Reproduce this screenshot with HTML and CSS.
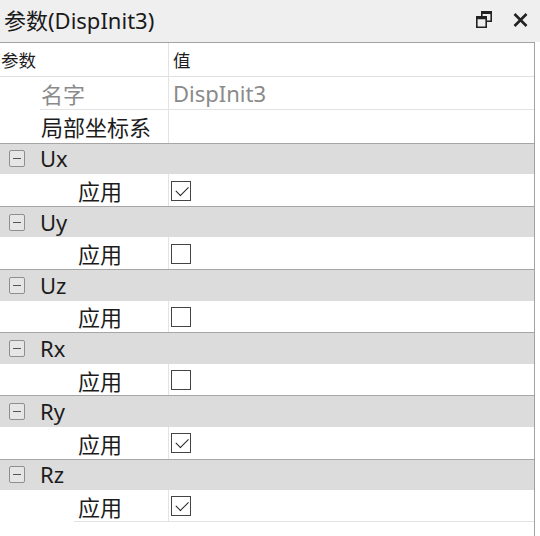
FILE: index.html
```html
<!DOCTYPE html>
<html lang="zh-CN">
<head>
<meta charset="utf-8">
<title>参数(DispInit3)</title>
<link rel="stylesheet" href="styles.css">
</head>
<body>
<div class="panel">
  <div class="titlebar">
    <div class="title">参数(DispInit3)</div>
    <div class="tools">
      <svg class="ico-restore" width="16" height="17" viewBox="0 0 16 17">
        <path d="M5 0h11v11h-5.5v-1.6h3.9V3H6.6v2H5z" fill="#222"/>
        <path d="M0 5h11v12H0z M1.6 8.2v7.2h7.8V8.2z" fill="#222" fill-rule="evenodd"/>
      </svg>
      <svg class="ico-close" width="15" height="14" viewBox="0 0 15 14">
        <path d="M1.5 1 L13.5 13 M13.5 1 L1.5 13" stroke="#222" stroke-width="2.6" fill="none"/>
      </svg>
    </div>
  </div>
  <div class="grid">
    <div class="row head">
      <div class="c-name">参数</div>
      <div class="c-val">值</div>
    </div>
    <div class="row prop lined">
      <div class="inner">
        <div class="c-name dim">名字</div>
        <div class="c-val dim">DispInit3</div>
      </div>
    </div>
    <div class="row prop">
      <div class="inner">
        <div class="c-name">局部坐标系</div>
        <div class="c-val"></div>
      </div>
    </div>

    <div class="group"><span class="toggle"></span><span class="g-label">Ux</span></div>
    <div class="row sub"><div class="inner"><div class="c-name">应用</div><div class="c-val"><span class="chk on"></span></div></div></div>

    <div class="group"><span class="toggle"></span><span class="g-label">Uy</span></div>
    <div class="row sub"><div class="inner"><div class="c-name">应用</div><div class="c-val"><span class="chk"></span></div></div></div>

    <div class="group"><span class="toggle"></span><span class="g-label">Uz</span></div>
    <div class="row sub"><div class="inner"><div class="c-name">应用</div><div class="c-val"><span class="chk"></span></div></div></div>

    <div class="group"><span class="toggle"></span><span class="g-label">Rx</span></div>
    <div class="row sub"><div class="inner"><div class="c-name">应用</div><div class="c-val"><span class="chk"></span></div></div></div>

    <div class="group"><span class="toggle"></span><span class="g-label">Ry</span></div>
    <div class="row sub"><div class="inner"><div class="c-name">应用</div><div class="c-val"><span class="chk on"></span></div></div></div>

    <div class="group"><span class="toggle"></span><span class="g-label">Rz</span></div>
    <div class="row sub last lined"><div class="inner"><div class="c-name">应用</div><div class="c-val"><span class="chk on"></span></div></div></div>
    <div class="filler"></div>
  </div>
</div>
</body>
</html>
```

FILE: styles.css
```css
* { box-sizing: border-box; }
html, body { margin: 0; padding: 0; background: #ffffff; }
body {
  width: 540px;
  height: 536px;
  overflow: hidden;
  font-family: "Noto Sans", "Noto Sans CJK SC", sans-serif;
  color: #1c1c1c;
}
.panel { display: flex; flex-direction: column; height: 536px; }

.titlebar {
  height: 42px;
  background: #efefef;
  display: flex;
  align-items: center;
  justify-content: space-between;
  padding: 0 12px 2px 4px;
}
.title { font-size: 22px; line-height: 1; color: #1a1a1a; }
.tools { display: flex; align-items: center; gap: 21px; }
.ico-restore { display: block; margin-top: -2px; }
.ico-close { display: block; }

.grid {
  flex: 1;
  width: 535px;
  border-top: 1px solid #a3a3a3;
  border-right: 1px solid #a3a3a3;
  display: flex;
  flex-direction: column;
  background: #fff;
}

.row { display: flex; flex-shrink: 0; }
.c-name { width: 168px; display: flex; align-items: center; }
.c-val { flex: 1; display: flex; align-items: center; border-left: 1px solid #e3e3e3; padding-left: 4px; }

.row.head { height: 34px; border-bottom: 1px solid #e0e0e0; font-size: 17.5px; }
.row.head .c-name { padding-left: 1px; }

.row .inner { flex: 1; display: flex; }
.row.prop { padding-left: 40px; font-size: 22px; }
.row.prop .c-name { width: 128px; padding-left: 1px; }
.row.prop.lined { height: 33px; }
.row.prop.lined .inner { border-bottom: 1px solid #e3e3e3; }
.row.prop:not(.lined) { height: 32.7px; }
.dim { color: #8a8a8a; }

.group {
  height: 31.6px;
  flex-shrink: 0;
  background: #dcdcdc;
  border-top: 1px solid #a6a6a6;
  display: flex;
  align-items: center;
  padding-left: 9px;
  font-size: 22px;
}
.toggle {
  width: 16px;
  height: 17px;
  border: 1px solid #8f8f8f;
  border-radius: 2px;
  background: #e6e6e6;
  position: relative;
  margin-right: 15px;
}
.toggle::after {
  content: "";
  position: absolute;
  left: 3px;
  right: 3px;
  top: 7px;
  height: 1px;
  background: #555;
}
.g-label { line-height: 1; padding-bottom: 1px; }

.row.sub { height: 31.6px; padding-left: 74px; font-size: 22px; }
.row.sub .c-name { width: 94px; padding-left: 4px; }
.row.sub.lined .inner { border-bottom: 1px solid #e3e3e3; }
.row.sub .c-val { padding-left: 2px; }

.chk {
  width: 20px;
  height: 20px;
  border: 1px solid #444;
  background: #fff;
  position: relative;
  margin-top: 1px;
}
.chk.on::after {
  content: "";
  position: absolute;
  left: 3.5px;
  top: 4px;
  width: 11px;
  height: 5.5px;
  border-left: 1.4px solid #222;
  border-bottom: 1.4px solid #222;
  transform: rotate(-45deg);
  transform-origin: center;
}
.filler { flex: 1; }
```
